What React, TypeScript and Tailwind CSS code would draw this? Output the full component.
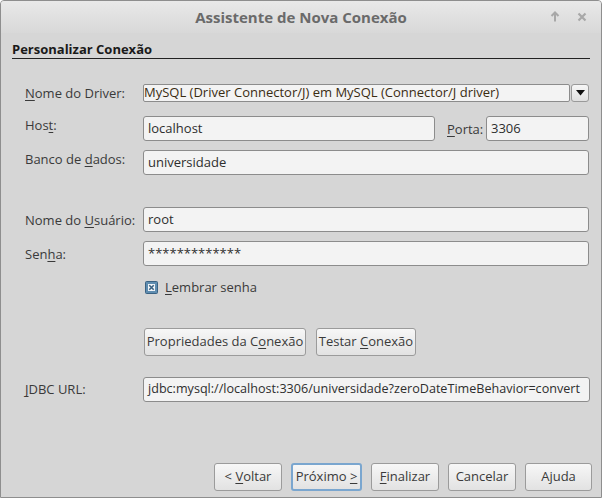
import React from 'react';

const font = { fontFamily: '"Open Sans", "Noto Sans", sans-serif' };

const U = ({ children }: { children: React.ReactNode }) => <span className="underline underline-offset-2">{children}</span>;

const Field = ({ value, className = '' }: { value: string; className?: string }) => (
  <div className={`h-[25px] flex items-center px-[4px] bg-[#f3f3f3] border border-[#8c8c8c] rounded-[3px] text-[#2e2e2e] overflow-hidden whitespace-nowrap ${className}`}>
    <span>{value}</span>
  </div>
);

const Btn = ({ children, className = '', focus = false }: { children: React.ReactNode; className?: string; focus?: boolean }) => (
  <button
    className={`h-[28px] flex items-center justify-center rounded-[3px] bg-gradient-to-b from-[#f7f7f7] to-[#e2e2e2] text-[13px] text-[#3a3a3a] ${
      focus ? 'border-2 border-[#7aa6cf]' : 'border border-[#9b9b9b]'
    } ${className}`}
  >
    <span className="whitespace-pre">{children}</span>
  </button>
);

const Label = ({ children, className = '' }: { children: React.ReactNode; className?: string }) => (
  <div className={`w-[118px] shrink-0 text-[13px] leading-[18px] text-[#3a3a3a] ${className}`}>{children}</div>
);

export default function App() {
  return (
    <div style={font} className="w-[602px] h-[498px] bg-[#d6d6d6] border border-[#8e8e8e] rounded-t-[4px] flex flex-col overflow-hidden">
      {/* title bar */}
      <div className="h-[32px] shrink-0 flex items-center relative bg-gradient-to-b from-[#e9e9e9] to-[#d8d8d8]">
        <div className="flex-1 text-center text-[15px] font-bold text-[#6a6a6a]">Assistente de Nova Conexão</div>
        <div className="absolute right-[14px] top-[10px] flex items-center gap-[17px]">
          <svg width="10" height="11" viewBox="0 0 10 11">
            <path d="M5 1.5 V10.5 M1.5 5 L5 1.5 L8.5 5" stroke="#a8a8a8" strokeWidth="2" fill="none" />
          </svg>
          <svg width="10" height="10" viewBox="0 0 10 10">
            <path d="M1.5 1.5 L8.5 8.5 M8.5 1.5 L1.5 8.5" stroke="#a8a8a8" strokeWidth="2.2" fill="none" />
          </svg>
        </div>
      </div>

      <div className="flex-1 flex flex-col px-[11px]">
        <div className="mt-[7px] border-b border-[#222] text-[13px] font-bold text-[#1a1a1a] leading-[18px]">Personalizar Conexão</div>

        <div className="flex flex-col pl-[13px] pr-[1px]">
          {/* driver */}
          <div className="flex items-start mt-[25px]">
            <Label><U>N</U>ome do Driver:</Label>
            <div className="flex-1 flex gap-[1px]">
              <div className="flex-1 h-[18px] flex items-center bg-[#f3f3f3] border border-[#8c8c8c] rounded-[2px] text-[13px] text-[#3a2c12] whitespace-nowrap overflow-hidden">
                <span>MySQL (Driver Connector/J) em MySQL (Connector/J driver)</span>
              </div>
              <div className="w-[18px] h-[18px] flex items-center justify-center rounded-[3px] border border-[#9a9a9a] bg-gradient-to-b from-[#f7f7f7] to-[#e0e0e0]">
                <svg width="9" height="6" viewBox="0 0 9 6"><path d="M0 0 H9 L4.5 5.5 Z" fill="#111" /></svg>
              </div>
            </div>
          </div>

          {/* host */}
          <div className="flex items-start mt-[14px]">
            <Label>Hos<U>t</U>:</Label>
            <Field value="localhost" className="w-[292px] text-[13px]" />
            <div className="ml-[12px] w-[39px] text-[13px] leading-[18px] text-[#3a3a3a] pt-[4px]"><U>P</U>orta:</div>
            <Field value="3306" className="flex-1 px-[1px] text-[13px]" />
          </div>

          {/* banco */}
          <div className="flex items-start mt-[9px]">
            <Label>Banco de <U>d</U>ados:</Label>
            <Field value="universidade" className="flex-1 text-[13px]" />
          </div>

          {/* usuario */}
          <div className="flex items-start mt-[32px]">
            <Label className="pt-[4px]">Nome do <U>U</U>suário:</Label>
            <Field value="root" className="flex-1 text-[13px]" />
          </div>

          {/* senha */}
          <div className="flex items-start mt-[9px]">
            <Label className="pt-[4px]">Sen<U>h</U>a:</Label>
            <Field value="*************" className="flex-1 text-[13px]" />
          </div>

          {/* checkbox */}
          <div className="flex items-center mt-[15px] pl-[120px] h-[13px]">
            <svg width="13" height="13" viewBox="0 0 13 13">
              <rect x="0.5" y="0.5" width="12" height="12" rx="1" fill="#5f8db0" stroke="#3a6283" />
              <rect x="3" y="3" width="7" height="7" fill="#f2f5f8" />
              <path d="M4.3 4.3 L8.7 8.7 M8.7 4.3 L4.3 8.7" stroke="#3a6283" strokeWidth="1.6" />
            </svg>
            <span className="ml-[7px] text-[13px] text-[#3a3a3a]"><U>L</U>embrar senha</span>
          </div>

          {/* buttons */}
          <div className="flex mt-[34px] pl-[119px] gap-[10px]">
            <Btn className="w-[162px]">Propriedades da C<U>o</U>nexão</Btn>
            <Btn className="w-[100px]">Testar <U>C</U>onexão</Btn>
          </div>

          {/* jdbc */}
          <div className="flex items-start mt-[21px]">
            <Label className="pt-[3px]"><U>J</U>DBC URL:</Label>
            <Field value="jdbc:mysql://localhost:3306/universidade?zeroDateTimeBehavior=convert" className="flex-1 mr-[-1px] px-[3px] text-[12.6px]" />
          </div>
        </div>

        {/* bottom buttons */}
        <div className="flex justify-end gap-[9px] mt-auto mb-[6px] mr-[-2px]">
          <Btn className="w-[68px]">&lt; <U>V</U>oltar</Btn>
          <Btn className="w-[71px]" focus>Próximo <U>&gt;</U></Btn>
          <Btn className="w-[68px]"><U>F</U>inalizar</Btn>
          <Btn className="w-[68px]">Cancelar</Btn>
          <Btn className="w-[67px]">Ajuda</Btn>
        </div>
      </div>
    </div>
  );
}
